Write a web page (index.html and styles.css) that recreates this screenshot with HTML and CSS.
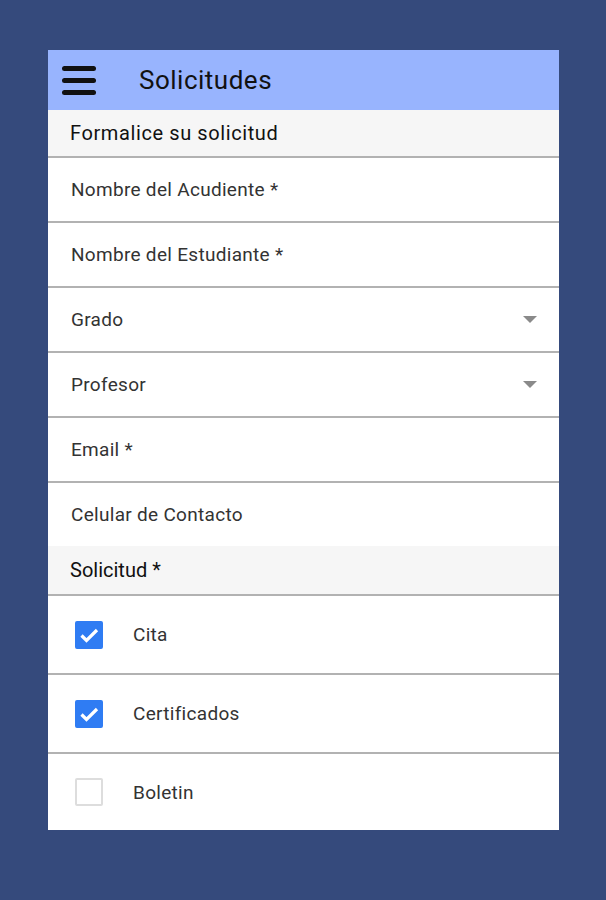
FILE: index.html
```html
<!DOCTYPE html>
<html lang="es">
<head>
  <meta charset="UTF-8" />
  <meta name="viewport" content="width=device-width, initial-scale=1.0"/>
  <title>Solicitudes</title>
  <link rel="stylesheet" href="styles.css">
</head>
<body>
  <div class="card">
    <header class="topbar">
      <button class="menu" aria-label="Menu">
        <span></span><span></span><span></span>
      </button>
      <h1>Solicitudes</h1>
    </header>

    <div class="subhead">Formalice su solicitud</div>

    <div class="field">Nombre del Acudiente *</div>
    <div class="field">Nombre del Estudiante *</div>
    <div class="field select">Grado <span class="caret"></span></div>
    <div class="field select">Profesor <span class="caret"></span></div>
    <div class="field">Email *</div>
    <div class="field last">Celular de Contacto</div>

    <div class="subhead small">Solicitud *</div>

    <label class="check">
      <span class="box on">
        <svg viewBox="0 0 24 24"><path d="M4.5 12.5l5 5L20 7" /></svg>
      </span>
      Cita
    </label>
    <label class="check">
      <span class="box on">
        <svg viewBox="0 0 24 24"><path d="M4.5 12.5l5 5L20 7" /></svg>
      </span>
      Certificados
    </label>
    <label class="check last">
      <span class="box"></span>
      Boletin
    </label>
  </div>
</body>
</html>
```

FILE: styles.css
```css
:root {
  --bg: #354a7c;
  --bar: #98b4fe;
  --sub: #f6f6f6;
  --line: #b2b2b2;
  --blue: #2f7cf3;
}

body {
  margin: 0;
  background: var(--bg);
  font-family: Roboto, "Noto Sans", sans-serif;
  color: #333;
}

.card {
  width: 511px;
  margin: 50px 0 0 48px;
  background: #fff;
  box-shadow: 0 2px 0 #1c2750;
}

.topbar {
  height: 60px;
  background: var(--bar);
  display: flex;
  align-items: center;
}

.menu {
  width: 34px;
  margin-left: 14px;
  padding: 0;
  border: none;
  background: none;
  display: flex;
  flex-direction: column;
  gap: 7px;
}

.menu span {
  height: 5px;
  border-radius: 3px;
  background: #111;
}

.topbar h1 {
  margin: 0 0 0 43px;
  font-size: 26px;
  font-weight: 400;
  letter-spacing: 0.5px;
  color: #111;
}

.subhead {
  height: 46px;
  background: var(--sub);
  border-bottom: 2px solid var(--line);
  display: flex;
  align-items: center;
  padding-left: 22px;
  font-size: 20px;
  letter-spacing: 0.6px;
  color: #111;
}

.subhead.small {
  height: 48px;
  letter-spacing: 0;
}

.field {
  height: 63px;
  border-bottom: 2px solid var(--line);
  display: flex;
  align-items: center;
  padding: 0 22px 0 23px;
  font-size: 19px;
  letter-spacing: 0.3px;
  color: #333;
}

.field.last {
  border-bottom: none;
}

.select {
  justify-content: space-between;
}

.caret {
  width: 0;
  height: 0;
  border-left: 7px solid transparent;
  border-right: 7px solid transparent;
  border-top: 7px solid #8a8a8a;
}

.check {
  height: 77px;
  border-bottom: 2px solid var(--line);
  display: flex;
  align-items: center;
  gap: 30px;
  padding-left: 27px;
  font-size: 19px;
  letter-spacing: 0.3px;
  color: #333;
}

.check.last {
  border-bottom: none;
  height: 76px;
}

.box {
  width: 28px;
  height: 28px;
  box-sizing: border-box;
  border-radius: 2px;
  border: 2px solid #ddd;
  display: flex;
  align-items: center;
  justify-content: center;
}

.box.on {
  background: var(--blue);
  border-color: var(--blue);
}

.box svg {
  width: 24px;
  height: 24px;
  fill: none;
  stroke: #fff;
  stroke-width: 3.2;
}
```
